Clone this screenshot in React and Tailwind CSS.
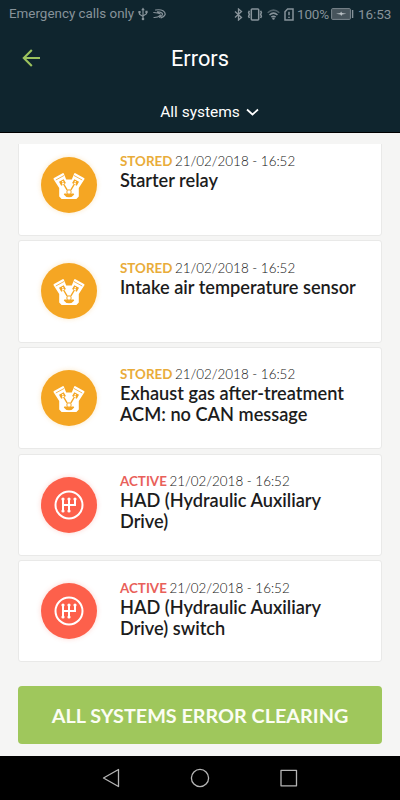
import React from 'react';

const errors = [
    { status: 'STORED', date: '21/02/2018 - 16:52', title: ['Starter relay'] },
    { status: 'STORED', date: '21/02/2018 - 16:52', title: ['Intake air temperature sensor'] },
    { status: 'STORED', date: '21/02/2018 - 16:52', title: ['Exhaust gas after-treatment', 'ACM: no CAN message'] },
    { status: 'ACTIVE', date: '21/02/2018 - 16:52', title: ['HAD (Hydraulic Auxiliary', 'Drive)'] },
    { status: 'ACTIVE', date: '21/02/2018 - 16:52', title: ['HAD (Hydraulic Auxiliary', 'Drive) switch'] }
];

const EngineIcon = () => (
    <svg width="38" height="38" viewBox="0 0 38 38">
        <path fill="#fff" d="M4 12 12.6 7.2q.8-.4 1.2.4L16.2 13.5h5.6L24.2 7.6q.4-.8 1.2-.4L34 12q.8.5.4 1.3L28.8 22v8.6L26.4 33H11.6L9.2 30.6V22L3.6 13.3Q3.2 12.5 4 12Z" />
        {/* pistons and rods, mirrored around the crankshaft */}
        {[null, 'translate(38 0) scale(-1 1)'].map((t, i) => (
            <g key={i} transform={t || undefined} stroke="#f5a623" fill="none">
                <path strokeWidth=".8" d="m5.8 14 8.4-4.6" />
                <path fill="#f5a623" stroke="none" d="m9 15.8 4.7-2.6 2.2 3.9-1.5.8-.8-1.4-1.7 1 .8 1.4-1.5.8Z" />
                <circle cx="12.7" cy="15.8" r=".8" fill="#fff" stroke="none" />
                <path strokeWidth="1.4" d="m13.6 18 3.6 6.2" />
            </g>
        ))}
        <path fill="#f5a623" d="M14.3 27.5h9.4l.5 1q-1.7 2.7-5.2 2.7t-5.2-2.7Z" />
        <circle cx="19" cy="26" r="2.2" fill="#fff" stroke="#f5a623" strokeWidth="1" />
    </svg>
);

const GearboxIcon = () => (
    <svg width="30" height="30" viewBox="0 0 30 30" fill="none" stroke="#fff">
        <circle cx="15" cy="15" r="13.5" strokeWidth="2" />
        <path strokeWidth="2" d="M9 9v12M15 9v12M21 9v6H9" />
        <g fill="#fff" stroke="none">
            <circle cx="9" cy="9" r="1.6" />
            <circle cx="15" cy="9" r="1.6" />
            <circle cx="21" cy="9" r="1.6" />
            <circle cx="9" cy="21" r="1.6" />
            <circle cx="15" cy="21" r="1.6" />
        </g>
    </svg>
);

const StatusBar = () => (
    <div className="flex h-7 items-center justify-between pl-[9px] pr-[9px] text-[#87939a]">
        <div className="flex items-center">
            <span className="text-[13.4px] whitespace-nowrap w-[125px]">Emergency calls only</span>
            <svg className="ml-1" width="10" height="14" viewBox="0 0 10 14" fill="none" stroke="currentColor" strokeWidth="1.2">
                <path d="M5 2v10M1.5 5v2.2L5 9.5M8.5 4.5v2.2L5 9" />
                <path fill="currentColor" stroke="none" d="m5 .5 1.8 2.7H3.2ZM.4 4h2.2v2.2H.4ZM7.4 3.7h2.2v2.2H7.4Z" />
                <circle cx="5" cy="12" r="1.3" fill="currentColor" stroke="none" />
            </svg>
            <svg className="ml-[5px]" width="13" height="10" viewBox="0 0 13 10" fill="none" stroke="currentColor" strokeLinecap="round">
                <path strokeWidth="1.2" d="M2.5 1q5-.8 7.5.8 2.8 2 2 4-.8 2.2-4 3M.8 3.5q4.5.5 6.2 1.2M4.5 2.8q5 .3 5 2.5-.2 2-3 3M1 8.5q3.5.2 6.5-2.3" />
            </svg>
        </div>
        <div className="flex items-center">
            <svg width="9" height="13" viewBox="0 0 9 13" fill="none" stroke="currentColor" strokeWidth="1.3">
                <path d="m1 3.5 6.5 6L4.5 12V1l3 2.5-6.5 6" />
            </svg>
            <svg className="ml-[4px]" width="16" height="13" viewBox="0 0 16 13" fill="none" stroke="currentColor" strokeWidth="1.5">
                <rect x="4.3" y=".9" width="7.4" height="11" rx=".8" />
                <path d="m2.4 2.8-.8 1.8.8 1.8-.8 1.8.8 1.8M13.6 2.8l.8 1.8-.8 1.8.8 1.8-.8 1.8" />
            </svg>
            <svg className="ml-[4px]" width="13" height="11" viewBox="0 0 13 11" fill="none" stroke="currentColor" strokeWidth="1.5">
                <path opacity=".55" d="M.7 3.7q5.8-5.2 11.6 0" />
                <path d="M2.5 6q4-3.7 8 0M4.4 8.1q2.1-1.8 4.2 0" />
                <circle cx="6.5" cy="9.6" r="1.2" fill="currentColor" stroke="none" />
            </svg>
            <svg className="ml-1" width="10" height="13" viewBox="0 0 10 13" fill="none" stroke="currentColor" strokeWidth="1.5">
                <path d="M1 3.7 3.6 1H9v11H1Z" />
                <path d="M5 3.7v3.5M5 8.7V10" />
            </svg>
            <span className="ml-[3px] w-[32px] text-[13.5px] tracking-[-0.2px] whitespace-nowrap">100%</span>
            <svg className="ml-[2px]" width="23" height="12" viewBox="0 0 23 12">
                <rect x=".6" y=".6" width="18.8" height="10.8" rx="1" fill="#46545c" stroke="#7b878e" />
                <path fill="#b9c1c5" d="m5 5.8 4.3-.8.8-1.4L11 5l4.4.8-4.3.8-.8 1.4-.9-1.4Z" />
                <path stroke="#87939a" strokeWidth="1.4" d="M21.6 2v8" />
            </svg>
            <span className="ml-[4px] w-[33px] text-[13.5px] tracking-[-0.1px] whitespace-nowrap">16:53</span>
        </div>
    </div>
);

const Header = () => (
    <div className="h-[133px] shrink-0 border-b border-black bg-[#0f252e] font-['Roboto',sans-serif]">
        <StatusBar />
        <div className="grid h-[60px] grid-cols-[1fr_auto_1fr] items-center">
            <svg className="ml-[22px]" width="19" height="18" viewBox="0 0 19 18" fill="none" stroke="#9cc35e" strokeWidth="2.1">
                <path d="M18 9H2M9.8 1 1.8 9l8 8" />
            </svg>
            <span className="pt-[2px] text-[21.8px] text-white">Errors</span>
        </div>
        <div className="flex h-[48px] items-center justify-center pl-[19px] text-white">
            <span className="pt-[2px] text-[15.5px]">All systems</span>
            <svg className="ml-[6px]" width="13" height="9" viewBox="0 0 13 9" fill="none" stroke="currentColor" strokeWidth="1.7">
                <path d="m1 1.5 5.5 5 5.5-5" />
            </svg>
        </div>
    </div>
);

const ErrorCard = ({ error }) => {
    const active = error.status === 'ACTIVE';

    return (
        <div className="flex h-[102.2px] shrink-0 rounded-[3px] border border-[#e9e9e8] bg-white pl-[22px]">
            <div className={`mt-[22px] flex size-14 shrink-0 items-center justify-center rounded-full ${active ? 'bg-[#fd604b] shadow-[0_0_5px_#fd604b44]' : 'bg-[#f5a623] shadow-[0_0_5px_#f5a62344]'}`}>
                {active ? <GearboxIcon /> : <EngineIcon />}
            </div>
            <div className="ml-[23px] mt-[17.3px] whitespace-nowrap">
                <div className="text-[13.4px] leading-[18px] text-[#111]">
                    <span className={`font-bold ${active ? 'text-[#e9605a]' : 'text-[#e9ac39]'}`}>{error.status}</span>
                    <span className="ml-[2.5px] font-light">{error.date}</span>
                </div>
                <div className="text-[18.2px] leading-[21px] font-semibold text-[#1c1c1c]">
                    {error.title.map((line) => (
                        <div key={line}>{line}</div>
                    ))}
                </div>
            </div>
        </div>
    );
};

const NavBar = () => (
    <div className="flex h-[44px] shrink-0 items-center justify-center bg-black">
        <svg width="196" height="20" viewBox="0 0 196 20" fill="none" stroke="#b5b5b5" strokeWidth="1.3" strokeLinejoin="round">
            <path d="M16.5 1.5v17L1.5 10Z" />
            <circle cx="98" cy="10" r="8.6" />
            <rect x="179" y="2.3" width="15.5" height="15.5" />
        </svg>
    </div>
);

const App = () => {
    return (
        <div className="flex h-[800px] w-[400px] flex-col overflow-hidden bg-[#f5f5f4] font-['Lato',sans-serif]">
            <Header />
            <div className="mt-[11px] flex h-[518.4px] shrink-0 flex-col justify-end gap-[4.4px] overflow-hidden px-[18px]">
                {errors.map((error) => (
                    <ErrorCard key={error.title.join(' ')} error={error} />
                ))}
            </div>
            <div className="flex flex-1 flex-col px-[18px] pt-[23.6px]">
                <button className="h-[58px] rounded-[4px] bg-[#9fc75c] pt-[2px] text-[19.8px] font-bold text-[#fbfdf3]">
                    ALL SYSTEMS ERROR CLEARING
                </button>
            </div>
            <NavBar />
        </div>
    );
};

export default App;
